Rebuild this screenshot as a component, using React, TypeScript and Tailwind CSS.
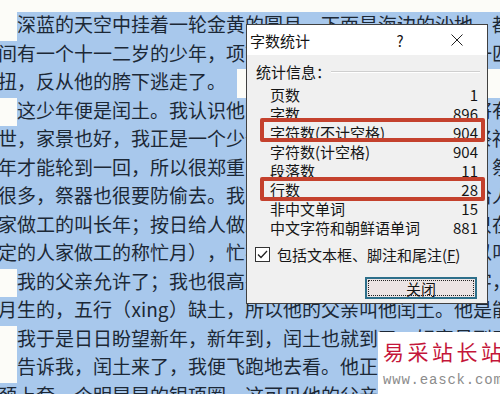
import type { ReactNode } from "react";

const PAGE = "bg-[#fcfcf8]";
const SEL = "bg-[#a8c8ec]";

type Row = { text: ReactNode; indent?: boolean; end?: boolean };

const ROWS: Row[] = [
  { indent: true, text: "深蓝的天空中挂着一轮金黄的圆月，下面是海边的沙地，都种着一望无际的碧绿的西瓜，其" },
  { text: "间有一个十一二岁的少年，项带银圈，手捏一柄钢叉，向一匹猹尽力的刺去，那猹却将身一" },
  { text: "扭，反从他的胯下逃走了。", end: true },
  { indent: true, text: "这少年便是闰土。我认识他时，也不过十多岁，离现在将有三十年了；那时我的父亲还在" },
  { text: "世，家景也好，我正是一个少爷。那一年，我家是一件大祭祀的值年。这祭祀，说是三十多" },
  { text: "年才能轮到一回，所以很郑重；正月里供祖像，供品很多，祭器很讲究，拜的人也" },
  { text: "很多，祭器也很要防偷去。我家只有一个忙月（我们这里给人做工的分三种：整年给一定人" },
  { text: "家做工的叫长年；按日给人做工的叫短工；自己也种地，只在过年过节以及收租时候来给一" },
  { text: "定的人家做工的称忙月），忙不过来，他便对父亲说，可以叫他的儿子闰土来管祭器的。" },
  { indent: true, text: "我的父亲允许了；我也很高兴，因为我早听到闰土这名字，而且知道他和我仿佛年纪，闰" },
  {
    text: (
      <>
        月生的，五行（<span className="inline-block w-[38px] text-center">xing</span>
        ）缺土，所以他的父亲叫他闰土。他是能装弶捉小鸟雀的。
      </>
    ),
  },
  { indent: true, text: "我于是日日盼望新年，新年到，闰土也就到了。好容易到了年末，有一日，母亲" },
  { indent: true, text: "告诉我，闰土来了，我便飞跑地去看。他正在厨房里，紫色的圆脸，头戴一顶小毡帽，" },
  { text: "颈上套一个明晃晃的银项圈，这可见他的父亲十分爱他，怕他死去，所以在神佛面前许下" },
];

const STATS = [
  { label: "页数", value: "1" },
  { label: "字数", value: "896" },
  { label: "字符数(不计空格)", value: "904" },
  { label: "字符数(计空格)", value: "904" },
  { label: "段落数", value: "11" },
  { label: "行数", value: "28" },
  { label: "非中文单词", value: "15" },
  { label: "中文字符和朝鲜语单词", value: "881" },
];

function DocLine({ text, indent, end }: Row) {
  return (
    <div className="flex h-[28.5px] items-start whitespace-nowrap leading-[24px]">
      {indent && <div className={`h-full w-[19px] shrink-0 ${PAGE}`} />}
      <div className={end ? `h-full shrink-0 pr-[11px] ${SEL}` : `h-full flex-1 ${SEL}`}>{text}</div>
      {end && <div className={`h-full flex-1 ${PAGE}`} />}
    </div>
  );
}

function WordCountDialog() {
  return (
    <div className="absolute left-[246px] top-[24px] flex h-[280px] w-[242px] flex-col border border-[#404040] bg-[#f0f0f0] text-[15px] leading-[19px] text-[#151515]">
      <div className="flex h-[30px] shrink-0 items-center bg-white pr-[1.5px]">
        <span className="flex-1 pl-[3px]">字数统计</span>
        <span className="flex w-[57px] justify-center">?</span>
        <span className="flex w-[57px] justify-center">
          <svg width="12" height="12" viewBox="0 0 12 12">
            <path d="M0.5 0.5L11.5 11.5M11.5 0.5L0.5 11.5" stroke="#222" strokeWidth="1" />
          </svg>
        </span>
      </div>

      <div className="flex flex-1 flex-col pt-[7px]">
        <div className="flex items-center pl-[9px] pr-[7px]">
          <span>统计信息：</span>
          <div className="h-[2px] flex-1 border-t border-b border-t-[#cfcfcf] border-b-white" />
        </div>

        <div className="mt-[4px] flex flex-col">
          {STATS.map((s) => (
            <div key={s.label} className="flex h-[19px] items-center justify-between pl-[23px] pr-[9px]">
              <span>{s.label}</span>
              <span>{s.value}</span>
            </div>
          ))}
        </div>

        <div className="mt-[8px] flex h-[19px] items-center gap-[7px] pl-[8px]">
          <span className="flex h-[15px] w-[15px] items-center justify-center border border-[#333] bg-white">
            <svg width="13" height="13" viewBox="0 0 13 13">
              <polyline points="2,6.5 5,9.5 11,3" fill="none" stroke="#222" strokeWidth="1.3" />
            </svg>
          </span>
          <span>
            包括文本框、脚注和尾注(<u>F</u>)
          </span>
        </div>

        <button className="ml-auto mr-[10px] mt-[13px] flex h-[22px] w-[112px] items-center justify-center border-2 border-[#2d6f8a] bg-[#ece4e4] p-[1px]">
          <span className="flex h-full w-full items-center justify-center border border-dotted border-[#222]">关闭</span>
        </button>
      </div>

      {/* red highlight boxes drawn over the stats */}
      <div className="absolute left-[13px] top-[93px] h-[24px] w-[225px] rounded-[2px] border-4 border-[#c4412d]" />
      <div className="absolute left-[13px] top-[152px] h-[24px] w-[225px] rounded-[2px] border-4 border-[#c4412d]" />
    </div>
  );
}

export default function App() {
  return (
    <div className={`relative h-[394px] w-[500px] overflow-hidden ${PAGE} font-['Noto_Sans_CJK_SC',sans-serif]`}>
      <div className="h-[12px]" />
      <div className="-ml-[2px] text-[19px] text-[#1c2836] [text-spacing-trim:space-all]">
        {ROWS.map((r, i) => (
          <DocLine key={i} {...r} />
        ))}
      </div>

      <WordCountDialog />

      <div className="absolute left-[378px] top-[332px] h-[62px] w-[122px] bg-white pl-[5px] pt-[6px]">
        <div className="whitespace-nowrap text-[21px] leading-[26px] tracking-[3.5px] text-[#c4163a]">易采站长站</div>
        <div className="mt-[8px] whitespace-nowrap font-['Liberation_Mono',monospace] text-[14px] leading-[16px] tracking-[0.8px] text-[#8c8c8c]">
          www.easck.com
        </div>
      </div>
    </div>
  );
}
